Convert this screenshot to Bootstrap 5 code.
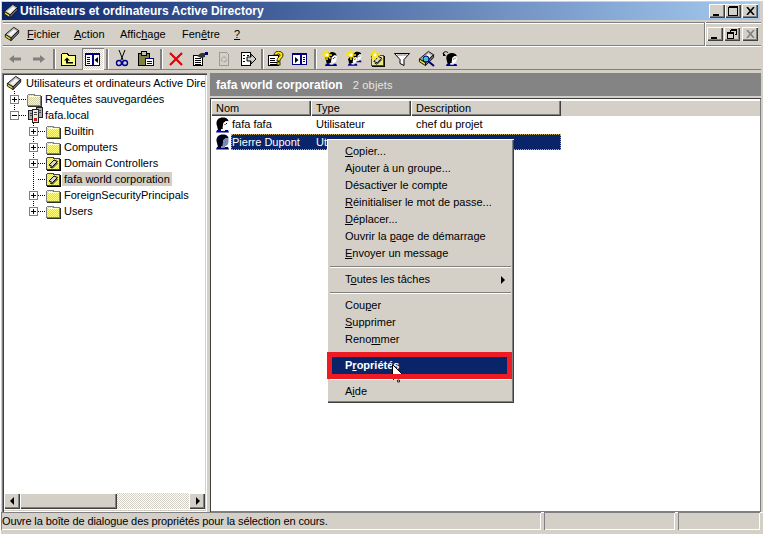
<!DOCTYPE html>
<html lang="fr"><head><meta charset="utf-8"><title>Utilisateurs et ordinateurs Active Directory</title>
<link href="https://cdn.jsdelivr.net/npm/bootstrap@5.3.0/dist/css/bootstrap.min.css" rel="stylesheet">
<style>
html,body{height:100%;margin:0}
body{width:763px;height:534px;overflow:hidden;background:#d4d0c8;color:#000;font:11px/13px "Liberation Sans",Arial,sans-serif}
u{text-decoration-thickness:1px;text-underline-offset:1px}
svg{display:block;flex:none}
.defs{width:0;height:0;overflow:hidden}
.win{width:763px;height:534px;padding:2px 3px 0 3px;position:relative;box-shadow:inset 1px 1px #fff}
.titlebar{height:18px;margin:0 0 2px -1px;background:linear-gradient(90deg,#0a246a,#a6caf0);color:#fff;font-weight:700;font-size:12px;padding:0 2px 0 1px}
.titlebar span{padding-top:1px;margin-left:1px}
.wbtn{width:16px;height:14px;background:#d4d0c8;box-shadow:inset 1px 1px #fff,inset -1px -1px #404040,inset -2px -2px #808080;padding:0}
.cl{margin-left:1px}.cl2{margin-left:1px}
.menubar{height:24px;padding:0 0 0 1px;box-shadow:inset 0 1px #808080,inset 0 2px #fff,inset 0 -1px #808080;margin-right:-1px}
.menubar>span{padding-top:1px}
.mb-a{margin-left:7px;width:47px}.mb-b{width:46px}.mb-c{width:62px}.mb-d{width:52px}
.mdi{width:57px;height:24px;box-shadow:inset 1px 0 #808080,inset 2px 0 #fff;padding-left:3px;margin-left:auto;gap:1px}
.toolbar{height:24px;box-shadow:inset 0 1px #fff,inset 0 -1px #808080;margin-right:-1px;padding-top:1px}
.tbtn{width:24px;height:22px}
.tbtn.on{background:repeating-conic-gradient(#fff 0 25%,#d4d0c8 0 50%) 0 0/2px 2px;box-shadow:inset 1px 1px #808080,inset -1px -1px #fff;width:22px;margin:0 1px}
.tsep{width:2px;height:20px;background:#808080;box-shadow:1px 0 #fff}
.s6{margin:0 2px}.s5{margin:0 2px 0 1px}.s4{margin:0 1px}
.panes{height:439px;margin-top:3px;gap:3px}
.treep{width:205px;margin-left:-1px;background:#fff;box-shadow:inset 1px 1px #808080,inset 2px 2px #404040,inset -1px -1px #fff,inset -2px -2px #d4d0c8;padding:2px 2px 3px}
.treein{flex:1;overflow:hidden;white-space:nowrap}
.trow{height:16px}
.txt{padding:0 2px;line-height:14px}
.lvl0{background:repeating-linear-gradient(#000 0 1px,transparent 1px 2px) 10px 0/1px 24px no-repeat}
.lvl2{background:repeating-linear-gradient(#000 0 1px,transparent 1px 2px) 29px 0/1px calc(100% - 8px) no-repeat}
.indr{width:2px;flex:none}.ind0{width:6px;flex:none}.ind1{width:25px;flex:none}
.exp{width:9px;height:9px;border:1px solid #808080;background:#fff;flex:none}
.exp::before{content:"";display:block;width:5px;height:1px;background:#000;margin:3px 1px 0}
.exp.p::after{content:"";display:block;width:1px;height:5px;background:#000;margin:-3px 3px 0}
.dash{width:8px;height:1px;background:repeating-linear-gradient(90deg,#000 0 1px,transparent 1px 2px);flex:none}
.selt{background:#d4d0c8}
.sbar{height:16px;margin-top:auto;flex:none}
.sbtn{width:16px;height:16px;background:#d4d0c8;box-shadow:inset 1px 1px #fff,inset -1px -1px #404040,inset -2px -2px #808080}
.sthumb{width:97px;background:#d4d0c8;box-shadow:inset 1px 1px #fff,inset -1px -1px #404040,inset -2px -2px #808080}
.strack{flex:1;background:repeating-conic-gradient(#fff 0 25%,#d4d0c8 0 50%) 0 0/2px 2px}
.rightp{flex:1;margin-right:-1px}
.rhead{height:23px;background:#848484;color:#fff;margin-bottom:2px;padding:1px 0 0 6px;font-size:12px}
.rhead b{margin-right:10px}
.rhead span{color:#e8e6e0;font-size:11px;letter-spacing:.2px}
.listp{flex:1;background:#fff;box-shadow:inset 1px 1px #404040,inset 0 0 0 1px #808080;padding:2px 1px 0 1px}
.lhead{height:16px;background:#d4d0c8;box-shadow:inset 0 1px #fff}
.lh{padding-left:5px;line-height:17px;box-shadow:inset 1px 1px #fff,inset -1px -1px #404040,inset -2px -2px #808080}
.c1{width:100px}.c2{width:100px}.c3{width:150px}
.lrow{height:17px;padding-left:4px}
.lcell1{width:96px;gap:1px}
.lc{width:100px;padding-left:5px}
.rsel{background:#0a246a;color:#fff;width:330px;height:16px;outline:1px dotted #c8b060;outline-offset:-1px;padding-left:1px;align-self:flex-end}
.rsel .nm{width:84px}
.clipt{width:11px;overflow:hidden;white-space:nowrap}
.ctx{position:absolute;left:327px;top:139px;width:187px;height:264px;background:#d4d0c8;box-shadow:inset 1px 1px #fff,inset -1px -1px #404040,inset -2px -2px #808080;padding:4px 3px}
.ctxi{height:17px;line-height:17px;padding:0 15px;display:flex;justify-content:space-between;align-items:center}
.ctxi>svg{margin-right:-10px}
.ctxs{height:1px;margin:4px 0;background:#808080;box-shadow:0 1px #fff}
.ctxsel{background:#0a246a;color:#fff;font-weight:700;outline:5px solid #ed1c24;margin:0 4px 0 2px;padding-left:13px;position:relative}
.ctxi>svg.ptr{position:absolute;left:60px;top:7px;margin:0}
.ctxi>svg.spk{position:absolute;left:60px;top:22px;margin:0}
.status{height:22px;margin:0 -3px;padding:0 3px 0 1px;gap:3px;box-shadow:inset 0 1px #fff}
.sc{height:18px;box-shadow:inset 1px 1px #808080,inset -1px -1px #fff;padding:2px 0 0 1px;line-height:15px}
.sc1{width:540px;letter-spacing:-.11px}.sc2{width:131px}.sc3{flex:1}
</style></head>
<body>
<svg class="defs">
<defs>
<pattern id="dy" width="2" height="2" patternUnits="userSpaceOnUse"><rect width="2" height="2" fill="#ffff78"/><rect width="1" height="1" fill="#d4d0a8"/><rect x="1" y="1" width="1" height="1" fill="#d4d0a8"/></pattern>
<symbol id="folder" viewBox="0 0 16 16"><path shape-rendering="crispEdges" d="M.5 14.500v-10l1-1h5l2 1h5v10z" fill="url(#dy)" stroke="#808080"/><path shape-rendering="crispEdges" d="M14.500 5v10M1 15.500h14" stroke="#303030"/><path shape-rendering="crispEdges" d="M1.500 5.500h11" stroke="#ffffd0"/></symbol>
<symbol id="ou" viewBox="0 0 16 16"><path shape-rendering="crispEdges" d="M.5 14.500v-11l1-1h5l2 1h5v11z" fill="url(#dy)" stroke="#404040"/><path shape-rendering="crispEdges" d="M14.500 4v11M1 15.500h14" stroke="#000"/><path d="M3 10l5-5 3.500 1.500-5 5z" fill="#d8d8d8" stroke="#000"/><path d="M4 12l2.500 1 5-5" fill="none" stroke="#000"/></symbol>
<symbol id="aduc" viewBox="0 0 18 18"><path d="M1.500 9.500 11 1.500l5.500 3.500L8 13.500z" fill="#b8b8b8" stroke="#111"/><path d="M4.500 9.500 11 4l3 2-6 5.500z" fill="#f4f4f4"/><path d="M1.500 9.500 8 13.500V16.500L1.500 12.500z" fill="#e8d830" stroke="#111"/><path d="M8 13.500 16.500 5V8L8 16.500z" fill="#707070" stroke="#111"/></symbol>
<symbol id="dom" viewBox="0 0 16 16"><path shape-rendering="crispEdges" d="M9.500 .5h6v10h-6z" fill="#b0b0b0" stroke="#222"/><path shape-rendering="crispEdges" d="M1.500 3.500h5v9h-5z" fill="#b0b0b0" stroke="#222"/><path shape-rendering="crispEdges" d="M5.500 2.500h6v13h-6z" fill="#e8e8e8" stroke="#222"/><path shape-rendering="crispEdges" d="M7 5h3M7 7h3M3 6h2M3 8h2M11 3h3M11 5h3" stroke="#444"/><rect x="7" y="11" width="3" height="3" fill="#c02020"/></symbol>
<symbol id="user" viewBox="0 0 16 16"><path d="M2 9C0 3 4 .5 8 .5c3 0 5.500 1.500 5.500 4L11 4 8.500 6 8 11l-1 2H3z" fill="#000"/><path d="M8.500 6 11 4l2.500.5V8l-1 3-3 1.500L7.500 11z" fill="#fff"/><path d="M11 6.500h1M9.500 7.500h1" stroke="#000"/><path d="M2 13h5l2 0 4 0 1 2.500H1z" fill="#000090"/><path d="M6 12h4v2H6z" fill="#f0f0f0"/></symbol>
<symbol id="usel" viewBox="0 0 16 16"><path d="M2 9C0 3 4 .5 8 .5c3 0 5.500 1.500 5.500 4L11 4 8.500 6 8 11l-1 2H3z" fill="#000018"/><path d="M8.500 6 11 4l2.500.5V8l-1 3-3 1.500L7.500 11z" fill="#7888b0"/><path d="M2 13h11l1 2.500H1z" fill="#000060"/><path d="M6 12h4v2H6z" fill="#7888b0"/></symbol>
<symbol id="star" viewBox="0 0 10 10"><path d="M5 0v10M0 5h10M1.500 1.500l7 7M8.500 1.500l-7 7" stroke="#ffe800" stroke-width="1.400"/><circle cx="5" cy="5" r="1.500" fill="#fff"/></symbol>
</defs>
</svg>
<div class="win d-flex flex-column">
 <div class="titlebar d-flex align-items-center">
  <svg width="16" height="16"><use href="#aduc"/></svg><span>Utilisateurs et ordinateurs Active Directory</span>
  <div class="d-flex ms-auto">
   <div class="wbtn d-flex align-items-end justify-content-center"><svg width="8" height="5" viewBox="0 0 8 5"><rect y="1" width="6" height="2"/></svg></div>
   <div class="wbtn d-flex align-items-center justify-content-center"><svg width="11" height="10" viewBox="0 0 11 10"><path shape-rendering="crispEdges" d="M.5 1.500h9v8h-9zM.5.5h9" fill="none" stroke="#000"/></svg></div>
   <div class="wbtn cl d-flex align-items-center justify-content-center"><svg width="9" height="8" viewBox="0 0 9 8"><path d="M1 0l7 8M8 0 1 8" stroke="#000" stroke-width="1.600"/></svg></div>
  </div>
 </div>
 <div class="menubar d-flex align-items-center">
  <svg width="16" height="16"><use href="#aduc"/></svg>
  <span class="mb-a"><u>F</u>ichier</span><span class="mb-b"><u>A</u>ction</span><span class="mb-c">Affic<u>h</u>age</span><span class="mb-d">Fen<u>ê</u>tre</span><span><u>?</u></span>
  <div class="mdi d-flex align-items-center">
   <div class="wbtn d-flex align-items-end justify-content-center"><svg width="8" height="5" viewBox="0 0 8 5"><rect y="1" width="6" height="2"/></svg></div>
   <div class="wbtn d-flex align-items-center justify-content-center"><svg width="10" height="10" viewBox="0 0 10 10"><path shape-rendering="crispEdges" d="M3.500 .5h6v5h-2M3.500 2.500V.5M.5 3.500h6v6h-6zM.5 4.500h6M3.500 1.500h6" fill="none" stroke="#000"/></svg></div>
   <div class="wbtn cl2 d-flex align-items-center justify-content-center"><svg width="9" height="8" viewBox="0 0 9 8"><path d="M1 0l7 8M8 0 1 8" stroke="#808080" stroke-width="1.600"/></svg></div>
  </div>
 </div>
 <div class="toolbar d-flex align-items-center">
  <div class="tbtn d-flex align-items-center justify-content-center"><svg width="16" height="16" viewBox="0 0 16 16"><path d="M2 8l5-4v2.500h7v3H7V12z" fill="#808080"/></svg></div>
  <div class="tbtn d-flex align-items-center justify-content-center"><svg width="16" height="16" viewBox="0 0 16 16"><path d="M14 8 9 4v2.500H2v3h7V12z" fill="#808080"/></svg></div>
  <div class="tsep s6"></div>
  <div class="tbtn d-flex align-items-center justify-content-center"><svg width="16" height="16" viewBox="0 0 16 16"><path shape-rendering="crispEdges" d="M.5 14.500v-11l1-1h5l1 2h7v10z" fill="#ffff80" stroke="#000"/><path d="M6 6.500 3 9.500h2v3h7v-1.500H7V9.500h2z" fill="#000"/></svg></div>
  <div class="tbtn on d-flex align-items-center justify-content-center"><svg width="16" height="14" viewBox="0 0 16 14"><path shape-rendering="crispEdges" d="M.5 1.500h14v12H.5z" fill="#fff" stroke="#000080"/><path shape-rendering="crispEdges" d="M.5 1h14v2H.5zM7 1h1.500v13H7z" fill="#000080"/><path shape-rendering="crispEdges" d="M2 5h3M2 7h3M2 9h3M2 11h3" stroke="#000080"/><path d="M13 5v6L9.500 8z" fill="#000"/></svg></div>
  <div class="tsep s5"></div>
  <div class="tbtn d-flex align-items-center justify-content-center"><svg width="16" height="17" viewBox="0 0 16 17"><path d="M5 0l4 10M11 0 7 10" stroke="#000" fill="none"/><circle cx="5" cy="13" r="2.500" fill="none" stroke="#000090" stroke-width="1.400"/><circle cx="11" cy="13" r="2.500" fill="none" stroke="#000090" stroke-width="1.400"/></svg></div>
  <div class="tbtn d-flex align-items-center justify-content-center"><svg width="16" height="16" viewBox="0 0 16 16"><path shape-rendering="crispEdges" d="M.5 2.500h11v12H.5z" fill="#808040" stroke="#000"/><path shape-rendering="crispEdges" d="M3.500 .5h5v4h-5z" fill="#c0c0c0" stroke="#000"/><path shape-rendering="crispEdges" d="M7.500 7.500h8v7h-8z" fill="#fff" stroke="#000080"/><path shape-rendering="crispEdges" d="M9 10h5M9 12h5" stroke="#000080"/></svg></div>
  <div class="tsep s6"></div>
  <div class="tbtn d-flex align-items-center justify-content-center"><svg width="16" height="16" viewBox="0 0 16 16"><path d="M2 2l12 12M14 2 2 14" stroke="#e00000" stroke-width="2.200"/></svg></div>
  <div class="tbtn d-flex align-items-center justify-content-center"><svg width="16" height="16" viewBox="0 0 16 16"><path shape-rendering="crispEdges" d="M1.500 4.500h9v10h-9z" fill="#fff" stroke="#000"/><path shape-rendering="crispEdges" d="M3 7h6M3 9h6M3 11h6M3 13h6" stroke="#000"/><path d="M5 5l4-3h4v4l-4 1z" fill="#333"/><rect x="13" y="1" width="3" height="3" fill="#000080"/></svg></div>
  <div class="tbtn d-flex align-items-center justify-content-center"><svg width="16" height="16" viewBox="0 0 16 16"><path shape-rendering="crispEdges" d="M3.500 1.500h7l2 2v11h-9z" fill="#d4d0c8" stroke="#9c9a94"/><circle cx="8" cy="8.500" r="2.500" fill="none" stroke="#9c9a94" stroke-dasharray="4 1"/></svg></div>
  <div class="tbtn d-flex align-items-center justify-content-center"><svg width="16" height="16" viewBox="0 0 16 16"><path shape-rendering="crispEdges" d="M1.500 1.500h9v13h-9z" fill="#fff" stroke="#000"/><path shape-rendering="crispEdges" d="M3 4h2M3 7h2M3 10h2M7 4h2" stroke="#000"/><path d="M7 6h4V3l5 5-5 5v-3H7z" fill="#d4d0c8" stroke="#000"/></svg></div>
  <div class="tsep s4"></div>
  <div class="tbtn d-flex align-items-center justify-content-center"><svg width="16" height="16" viewBox="0 0 16 16"><path shape-rendering="crispEdges" d="M.5 4.500h10v10H.5z" fill="#fff" stroke="#000"/><path shape-rendering="crispEdges" d="M2 7h5M2 9h5M2 11h7M2 13h7" stroke="#000"/><path d="M6 4c0-5 9-5 9 0 0 3-3 3-3 6H9c0-4 3-4 3-6 0-1.500-3-1.500-3 0z" fill="#ffe800" stroke="#000" stroke-width=".8"/><rect x="9" y="11" width="3" height="3" fill="#ffe800" stroke="#000" stroke-width=".8"/></svg></div>
  <div class="tbtn d-flex align-items-center justify-content-center"><svg width="16" height="14" viewBox="0 0 16 14"><path shape-rendering="crispEdges" d="M.5 1.500h14v11H.5z" fill="#fff" stroke="#000080"/><path shape-rendering="crispEdges" d="M.5 1h14v2H.5zM8 1h1.500v12H8z" fill="#000080"/><path d="M3 5v6l3.500-3z" fill="#000"/><path shape-rendering="crispEdges" d="M11 5h2M11 7h2M11 9h2" stroke="#000080"/></svg></div>
  <div class="tsep s6"></div>
  <div class="tbtn d-flex align-items-center justify-content-center"><svg width="17" height="17"><use href="#user" x="2" y="1" width="15" height="16"/><use href="#star" width="10" height="10"/></svg></div>
  <div class="tbtn d-flex align-items-center justify-content-center"><svg width="17" height="17"><use href="#user" x="6" y="0" width="11" height="14"/><use href="#user" x="1" y="3" width="12" height="14"/><use href="#star" width="10" height="10"/></svg></div>
  <div class="tbtn d-flex align-items-center justify-content-center"><svg width="17" height="17"><use href="#ou" x="1" y="2" width="15" height="15"/><use href="#star" width="10" height="10"/></svg></div>
  <div class="tbtn d-flex align-items-center justify-content-center"><svg width="16" height="16" viewBox="0 0 16 16"><path d="M.5 2.500h15L10 8.500v6l-4-2v-4z" fill="#fff" stroke="#000"/><path d="M3 4h10" stroke="#808080"/></svg></div>
  <div class="tbtn d-flex align-items-center justify-content-center"><svg width="17" height="17"><use href="#aduc" width="17" height="17"/><circle cx="8" cy="9" r="3" fill="#40c0c8" stroke="#000080"/><path d="M10 11l6 5" stroke="#000080" stroke-width="2"/></svg></div>
  <div class="tbtn d-flex align-items-center justify-content-center"><svg width="17" height="17"><use href="#user" x="3" y="2" width="14" height="15"/><path d="M1 4c1-3 4-3 5-1" fill="none" stroke="#000"/><path d="M1 2v4h3z" fill="#000"/></svg></div>
 </div>
 <div class="panes d-flex">
  <div class="treep d-flex flex-column">
   <div class="treein">
    <div class="trow d-flex align-items-center"><span class="indr"></span><svg width="16" height="16" class="me-1"><use href="#aduc"/></svg><span>Utilisateurs et ordinateurs Active Dire</span></div>
    <div class="lvl0">
     <div class="trow d-flex align-items-center"><span class="ind0"></span><span class="exp p"></span><span class="dash"></span><svg width="16" height="16"><use href="#folder"/></svg><span class="txt">Requêtes sauvegardées</span></div>
     <div class="trow d-flex align-items-center"><span class="ind0"></span><span class="exp"></span><span class="dash"></span><svg width="16" height="16"><use href="#dom"/></svg><span class="txt">fafa.local</span></div>
    </div>
    <div class="lvl2">
     <div class="trow d-flex align-items-center"><span class="ind1"></span><span class="exp p"></span><span class="dash"></span><svg width="16" height="16"><use href="#folder"/></svg><span class="txt">Builtin</span></div>
     <div class="trow d-flex align-items-center"><span class="ind1"></span><span class="exp p"></span><span class="dash"></span><svg width="16" height="16"><use href="#folder"/></svg><span class="txt">Computers</span></div>
     <div class="trow d-flex align-items-center"><span class="ind1"></span><span class="exp p"></span><span class="dash"></span><svg width="16" height="16"><use href="#ou"/></svg><span class="txt">Domain Controllers</span></div>
     <div class="trow d-flex align-items-center"><span class="ind1"></span><span class="exp invisible"></span><span class="dash"></span><svg width="16" height="16"><use href="#ou"/></svg><span class="txt selt">fafa world corporation</span></div>
     <div class="trow d-flex align-items-center"><span class="ind1"></span><span class="exp p"></span><span class="dash"></span><svg width="16" height="16"><use href="#folder"/></svg><span class="txt">ForeignSecurityPrincipals</span></div>
     <div class="trow d-flex align-items-center"><span class="ind1"></span><span class="exp p"></span><span class="dash"></span><svg width="16" height="16"><use href="#folder"/></svg><span class="txt">Users</span></div>
    </div>
   </div>
   <div class="sbar d-flex">
    <div class="sbtn d-flex align-items-center justify-content-center"><svg width="5" height="8" viewBox="0 0 5 8"><path d="M4 0v8L0 4z"/></svg></div>
    <div class="sthumb"></div><div class="strack"></div>
    <div class="sbtn d-flex align-items-center justify-content-center"><svg width="5" height="8" viewBox="0 0 5 8"><path d="M1 0v8l4-4z"/></svg></div>
   </div>
  </div>
  <div class="rightp d-flex flex-column">
   <div class="rhead d-flex align-items-center"><b>fafa world corporation</b><span>2 objets</span></div>
   <div class="listp">
    <div class="lhead d-flex"><div class="lh c1">Nom</div><div class="lh c2">Type</div><div class="lh c3">Description</div></div>
    <div class="lrow d-flex align-items-center"><div class="lcell1 d-flex align-items-center"><svg width="16" height="16"><use href="#user"/></svg><span>fafa fafa</span></div><div class="lc">Utilisateur</div><div class="lc">chef du projet</div></div>
    <div class="lrow d-flex align-items-center"><svg width="16" height="16"><use href="#usel"/></svg><div class="rsel d-flex align-items-center"><span class="nm">Pierre Dupont</span><span class="clipt">Utilisateur</span></div></div>
   </div>
  </div>
 </div>
 <div class="status d-flex">
  <div class="sc sc1">Ouvre la boîte de dialogue des propriétés pour la sélection en cours.</div>
  <div class="sc sc2"></div><div class="sc sc3"></div>
 </div>
 <div class="ctx">
  <div class="ctxi"><span><u>C</u>opier...</span></div>
  <div class="ctxi"><span>A<u>j</u>outer à un groupe...</span></div>
  <div class="ctxi"><span>Désacti<u>v</u>er le compte</span></div>
  <div class="ctxi"><span><u>R</u>éinitialiser le mot de passe...</span></div>
  <div class="ctxi"><span><u>D</u>éplacer...</span></div>
  <div class="ctxi"><span>Ouvrir la <u>p</u>age de démarrage</span></div>
  <div class="ctxi"><span><u>E</u>nvoyer un message</span></div>
  <div class="ctxs"></div>
  <div class="ctxi"><span>T<u>o</u>utes les tâches</span><svg width="5" height="8" viewBox="0 0 5 8"><path d="M0 0v8l4-4z"/></svg></div>
  <div class="ctxs"></div>
  <div class="ctxi"><span>Cou<u>p</u>er</span></div>
  <div class="ctxi"><span><u>S</u>upprimer</span></div>
  <div class="ctxi"><span>Reno<u>m</u>mer</span></div>
  <div class="ctxs"></div>
  <div class="ctxi ctxsel"><span>P<u>r</u>opriétés</span><svg class="ptr" width="11" height="10" viewBox="0 0 11 10"><path d="M.5.5v14l3.500-3 2.500 6 2-1-2.500-5.500H11z" fill="#fff" stroke="#000"/></svg><svg class="spk" width="9" height="4" viewBox="0 0 9 4"><path d="M1 0h1v1H1z"/><path d="M5.500 1h2v2h-2z" fill="none" stroke="#333"/></svg></div>
  <div class="ctxs"></div>
  <div class="ctxi"><span>A<u>i</u>de</span></div>
 </div>
</div>
<script src="https://cdn.jsdelivr.net/npm/bootstrap@5.3.0/dist/js/bootstrap.bundle.min.js"></script>
</body></html>
